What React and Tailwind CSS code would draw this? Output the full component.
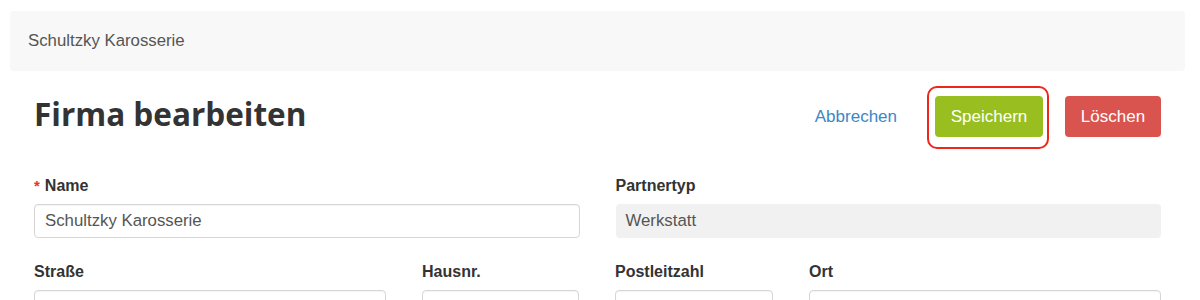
export default function App() {
  const label = "text-[16px] font-bold text-[#333] leading-none";
  const input =
    "h-[34px] w-full rounded-[4px] border border-[#d6d6d6] bg-white px-[10px] text-[16.8px] text-[#555] outline-none shadow-[inset_0_1px_1px_rgba(0,0,0,0.05)]";

  return (
    <div className="min-h-[300px] bg-white pt-[11px] font-['Liberation_Sans',Arial,sans-serif]">
      {/* breadcrumb bar */}
      <div className="mx-[10px] mr-[15px] flex h-[60px] items-center rounded-[4px] bg-[#f8f8f8] px-[18px] text-[16.8px] text-[#555]">
        Schultzky Karosserie
      </div>

      <div className="ml-[34px] w-[1127px]">
        {/* title row */}
        <div className="mt-[25px] flex h-[41px] items-center justify-between">
          <h1 className="pb-[6px] font-['Open_Sans',sans-serif] text-[31.5px] font-bold leading-none text-[#333]">
            Firma bearbeiten
          </h1>
          <div className="flex items-center">
            <button className="text-[17px] text-[#3a87c8]">Abbrechen</button>
            <div className="relative ml-[38px]">
              <button className="h-[41px] w-[108px] rounded-[4px] bg-[#98bf1f] text-[17px] text-white">
                Speichern
              </button>
              <div className="pointer-events-none absolute -top-[10px] -right-[6px] -bottom-[12px] -left-[8px] rounded-[10px] border-2 border-[#f0261a]" />
            </div>
            <button className="ml-[22px] h-[41px] w-[96px] rounded-[4px] bg-[#d9534f] text-[17px] text-white">
              Löschen
            </button>
          </div>
        </div>

        {/* form */}
        <div className="mt-[41px] grid grid-cols-2 gap-x-[36px]">
          <div>
            <div className={label}>
              <span className="mr-[5px] text-[15px] text-[#e8322c]">*</span>Name
            </div>
            <input className={input + " mt-[10px]"} defaultValue="Schultzky Karosserie" readOnly />
          </div>
          <div>
            <div className={label}>Partnertyp</div>
            <div className="mt-[10px] flex h-[34px] items-center rounded-[4px] bg-[#f1f1f1] px-[10px] text-[16.8px] text-[#555]">
              Werkstatt
            </div>
          </div>
        </div>

        <div className="mt-[26px] grid grid-cols-[352px_157px_158px_352px] gap-x-[36px]">
          {["Straße", "Hausnr.", "Postleitzahl", "Ort"].map((l) => (
            <div key={l}>
              <div className={label}>{l}</div>
              <input className={input + " mt-[10px]"} readOnly />
            </div>
          ))}
        </div>
      </div>
    </div>
  );
}
